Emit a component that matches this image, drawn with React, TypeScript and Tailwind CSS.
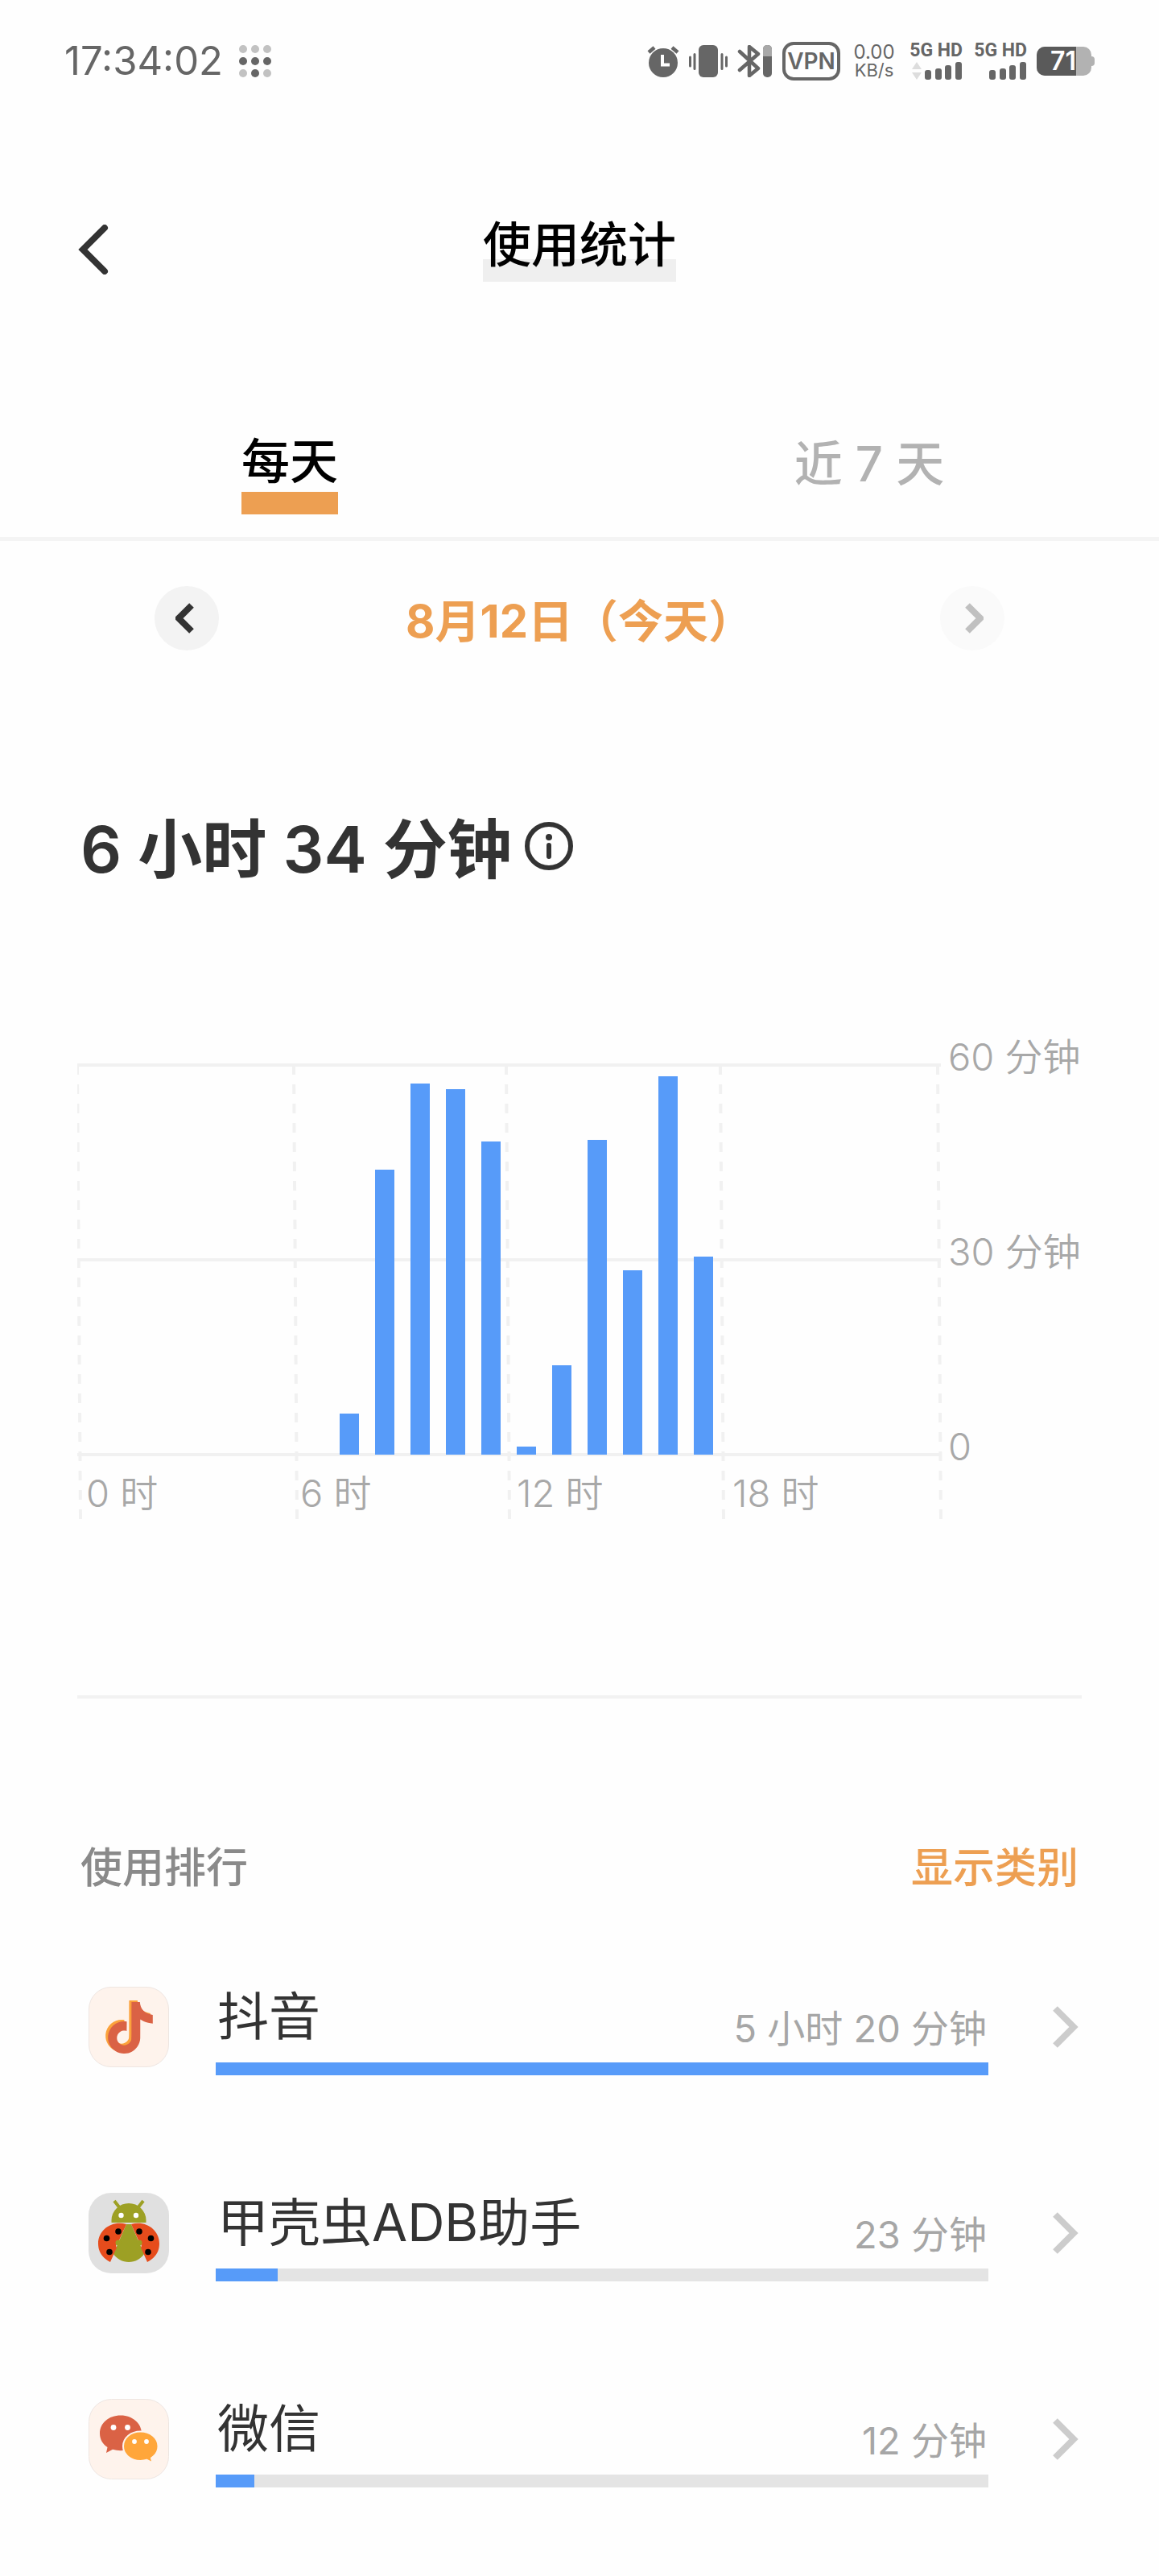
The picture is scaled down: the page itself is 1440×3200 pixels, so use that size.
import type { ReactNode } from "react";
import { SiTiktok } from "react-icons/si";

interface AppUsage {
  name: string;
  time: string;
  percent: number;
  icon: ReactNode;
}

// bar heights by hour of the day, 484 is a full hour
const hourly = [
  { hour: 7, height: 51 },
  { hour: 8, height: 354 },
  { hour: 9, height: 461 },
  { hour: 10, height: 454 },
  { hour: 11, height: 389 },
  { hour: 12, height: 10 },
  { hour: 13, height: 111 },
  { hour: 14, height: 391 },
  { hour: 15, height: 229 },
  { hour: 16, height: 470 },
  { hour: 17, height: 246 },
];

const columns = [
  { x: 0, label: "0 时", labelX: 11 },
  { x: 269, label: "6 时", labelX: 277 },
  { x: 533, label: "12 时", labelX: 546 },
  { x: 799, label: "18 时", labelX: 814 },
  { x: 1069, label: "", labelX: 0 },
];

const rows = [
  { y: 43, label: "60 分钟" },
  { y: 285, label: "30 分钟" },
  { y: 527, label: "0" },
];

function DotGrid() {
  const dark = [3, 4, 5, 7];
  return (
    <svg className="h-10 w-10" viewBox="0 0 40 40" aria-hidden="true">
      {Array.from({ length: 9 }, (_, i) => (
        <circle
          key={i}
          cx={5 + (i % 3) * 15}
          cy={5 + Math.floor(i / 3) * 15}
          r="5"
          fill={dark.includes(i) ? "#666" : "#c2c2c2"}
        />
      ))}
    </svg>
  );
}

function AlarmIcon() {
  return (
    <svg className="h-10 w-10" viewBox="0 0 40 40" aria-hidden="true">
      <circle cx="20" cy="22" r="18" fill="#666" />
      <path d="M2 9l7-6M38 9l-7-6" stroke="#666" strokeWidth="4.5" />
      <path d="M19 12v12.500h9" fill="none" stroke="#fff" strokeWidth="4" />
    </svg>
  );
}

function VibrateIcon() {
  return (
    <svg className="h-10 w-12" viewBox="0 0 48 40" aria-hidden="true">
      <rect x="12" y="0" width="24" height="40" rx="6" fill="#666" />
      <path
        d="M1.500 15v11M7 11.500v18M41 11.500v18M46.500 15v11"
        stroke="#666"
        strokeWidth="3"
        strokeLinecap="round"
      />
    </svg>
  );
}

function BluetoothIcon() {
  return (
    <svg className="h-10 w-11" viewBox="0 0 44 40" aria-hidden="true">
      <path
        d="M3 8l23 21-11 9V2l11 9L3 31"
        fill="none"
        stroke="#666"
        strokeWidth="4.500"
        strokeLinecap="round"
        strokeLinejoin="round"
      />
      <rect x="32" y="0" width="11" height="40" rx="5" fill="#666" />
      <path d="M32 14V5a5 5 0 0 1 5-5h1a5 5 0 0 1 5 5v9z" fill="#a8a8a8" />
    </svg>
  );
}

function Signal({ arrows = false }: { arrows?: boolean }) {
  return (
    <div className="flex w-[68px] flex-col items-end gap-1">
      <span className="font-[Roboto] text-[23px] leading-[20px] font-bold whitespace-nowrap">
        5G HD
      </span>
      <svg className="h-[22px] w-[64px]" viewBox="0 0 64 22" aria-hidden="true">
        {arrows && <path d="M7 0l6 9H1zM7 22l6-9H1z" fill="#ddd" />}
        <rect x="17" y="10" width="8" height="12" rx="3" fill="#666" />
        <rect x="30" y="8" width="8" height="14" rx="3" fill="#666" />
        <rect x="42" y="4" width="8" height="18" rx="3" fill="#666" />
        <rect x="55" y="0" width="8" height="22" rx="3" fill="#666" />
      </svg>
    </div>
  );
}

function Battery() {
  return (
    <div className="flex items-center">
      <div className="flex h-9 w-[68px] rounded-[10px] bg-[#b2b2b2]">
        <span className="flex w-[49px] items-center justify-end rounded-l-[10px] bg-[#5a5a5a] text-[32px] leading-9 font-semibold text-white">
          71
        </span>
      </div>
      <div className="h-3 w-1 rounded-r bg-[#b2b2b2]" />
    </div>
  );
}

function StatusBar() {
  return (
    <div className="flex h-12 items-center justify-between px-20 text-[#666]">
      <div className="flex items-center gap-5">
        <time className="text-[49px] leading-12">17:34:02</time>
        <DotGrid />
      </div>
      <div className="flex items-center gap-3">
        <AlarmIcon />
        <VibrateIcon />
        <BluetoothIcon />
        <span className="flex h-12 w-[72px] items-center justify-center rounded-[14px] border-4 border-[#666] text-[28px] leading-8 font-semibold">
          VPN
        </span>
        <div className="flex w-[60px] flex-col items-center text-[22px] leading-[22px]">
          <span className="text-[24px]">0.00</span>
          <span>KB/s</span>
        </div>
        <Signal arrows />
        <Signal />
        <Battery />
      </div>
    </div>
  );
}

function BackChevron() {
  return (
    <svg className="h-[62px] w-10" viewBox="0 0 40 62" aria-hidden="true">
      <path
        d="M34 4L7 31l27 27"
        fill="none"
        stroke="currentColor"
        strokeWidth="8"
        strokeLinecap="round"
      />
    </svg>
  );
}

function SmallChevron({ flip = false }: { flip?: boolean }) {
  return (
    <svg className="h-10 w-6" viewBox="0 0 24 40" aria-hidden="true">
      <path
        d={flip ? "M4 4l16 16L4 36" : "M20 4L4 20l16 16"}
        fill="none"
        stroke="currentColor"
        strokeWidth="8"
      />
    </svg>
  );
}

function InfoIcon() {
  return (
    <svg className="h-[60px] w-[60px]" viewBox="0 0 60 60" aria-hidden="true">
      <circle cx="30" cy="30" r="27" fill="none" stroke="#333" strokeWidth="6" />
      <circle cx="30" cy="19" r="4" fill="#333" />
      <path d="M30 29v14" stroke="#333" strokeWidth="6" strokeLinecap="round" />
    </svg>
  );
}

function DouyinIcon() {
  return (
    <div className="relative h-[100px] w-[100px] rounded-[28px] border border-[#eee6e2] bg-[#fef3ec]">
      <SiTiktok className="absolute top-4 left-4 h-16 w-16 text-[#fba23c]" />
      <SiTiktok className="absolute top-[18px] left-[19px] h-16 w-16 text-[#da6245]" />
    </div>
  );
}

function BeetleIcon() {
  return (
    <svg className="h-[100px] w-[100px]" viewBox="0 0 100 100" aria-hidden="true">
      <rect width="100" height="100" rx="28" fill="#e0e0e0" />
      <path d="M32 10l7 9M68 10l-7 9" stroke="#9da024" strokeWidth="4" />
      <path d="M28.500 37V34a21.500 21 0 0 1 43 0v3z" fill="#9da024" />
      <circle cx="40.500" cy="28" r="3.200" fill="#fff" />
      <circle cx="59" cy="28" r="3.200" fill="#fff" />
      <path d="M47 39h6l16 37c-4 6-11 10-19 10s-15-4-19-10z" fill="#9da024" />
      <path
        d="M47 39C29 34 12 46 12 63c0 10 5 18 15 23l8-18c-2-3 0-8 3-9z"
        fill="#e64c1c"
      />
      <path
        d="M53 39c18-5 35 7 35 24 0 10-5 18-15 23l-8-18c2-3 0-8-3-9z"
        fill="#e64c1c"
      />
      <circle cx="37" cy="62" r="3.500" fill="#9da024" />
      <circle cx="63" cy="62" r="3.500" fill="#9da024" />
      <g fill="#000">
        <circle cx="37" cy="48" r="3.800" />
        <circle cx="22.500" cy="56.500" r="3.800" />
        <circle cx="26" cy="73.500" r="3.800" />
        <circle cx="63" cy="48" r="3.800" />
        <circle cx="77.500" cy="56.500" r="3.800" />
        <circle cx="74" cy="73.500" r="3.800" />
      </g>
    </svg>
  );
}

function WechatIcon() {
  return (
    <svg className="h-[100px] w-[100px]" viewBox="0 0 100 100" aria-hidden="true">
      <rect x=".5" y=".5" width="99" height="99" rx="28" fill="#fef3ec" stroke="#eee6e2" />
      <path
        d="M40 20.500c-15 0-26 9.500-26 22.500 0 7 3.500 13 9.500 17l-1.500 7 8-4.200c3 .9 6.500 1.400 10 1.400 15 0 26-9 26-21.200S55 20.500 40 20.500z"
        fill="#da6245"
      />
      <circle cx="31" cy="35.500" r="3.400" fill="#fff" />
      <circle cx="48.500" cy="35.500" r="3.400" fill="#fff" />
      <path
        d="M64.500 40.500c-12 0-21.500 8-21.500 18.300s9.500 18.200 21.500 18.200c3 0 5.500-.4 8-1.200l7 3.700-1.500-6c5-3.300 8.500-8.500 8.500-14.700 0-10.300-10-18.300-22-18.300z"
        fill="#ffa63a"
        stroke="#fef3ec"
        strokeWidth="2"
      />
      <circle cx="57" cy="53" r="2.900" fill="#fff" />
      <circle cx="72" cy="53" r="2.900" fill="#fff" />
    </svg>
  );
}

const apps: AppUsage[] = [
  { name: "抖音", time: "5 小时 20 分钟", percent: 100, icon: <DouyinIcon /> },
  { name: "甲壳虫ADB助手", time: "23 分钟", percent: 8, icon: <BeetleIcon /> },
  { name: "微信", time: "12 分钟", percent: 5, icon: <WechatIcon /> },
];

function UsageChart() {
  return (
    <svg className="block h-auto w-full" viewBox="0 0 1248 610" role="img" aria-label="每小时使用时长">
      {rows.map((row) => (
        <line key={row.y} x1="0" x2="1073" y1={row.y} y2={row.y} stroke="#f1f1f1" strokeWidth="4" />
      ))}
      {columns.map((col) => (
        <line
          key={col.x}
          x1={col.x}
          x2={col.x + 4}
          y1="43"
          y2="608"
          stroke="#f1f1f1"
          strokeWidth="4"
          strokeDasharray="12 12"
        />
      ))}
      {hourly.map((bar) => (
        <rect
          key={bar.hour}
          x={18 + bar.hour * 44}
          y={527 - bar.height}
          width="24"
          height={bar.height}
          fill="#579bf9"
        />
      ))}
      <g className="text-[47px] font-[350]" fill="#a8a8a8">
        {columns.map((col) => (
          <text key={col.x} x={col.labelX} y="592">
            {col.label}
          </text>
        ))}
        {rows.map((row) => (
          <text key={row.y} x="1082" y={row.y + 7}>
            {row.label}
          </text>
        ))}
      </g>
    </svg>
  );
}

function UsageRow({ app }: { app: AppUsage }) {
  return (
    <li>
      <a href="#app" className="flex items-start pl-[14px]">
        {app.icon}
        <div className="ml-[58px] flex-1">
          <div className="flex h-[78px] items-end justify-between px-0.5">
            <span className="self-start text-[64px] leading-[74px] text-[#333]">{app.name}</span>
            <span className="text-[47px] leading-[52px] text-[#a6a6a6]">{app.time}</span>
          </div>
          <div className="mt-4 h-4 bg-[#e4e4e4]">
            <div className="h-full bg-[#579bf9]" style={{ width: `${app.percent}%` }} />
          </div>
        </div>
        <div className="ml-20 flex h-[100px] w-9 items-center text-[#ccc]">
          <svg className="h-[54px] w-8" viewBox="0 0 32 54" aria-hidden="true">
            <path d="M3 4l23 23L3 50" fill="none" stroke="currentColor" strokeWidth="8" />
          </svg>
        </div>
      </a>
    </li>
  );
}

export default function App() {
  return (
    <div
      lang="zh-CN"
      className="min-h-screen bg-[#fefefe] pt-[52px] pb-[110px] font-[Inter,'Noto_Sans_CJK_SC',sans-serif]"
    >
      <StatusBar />

      <header className="mt-[170px] grid grid-cols-[1fr_auto_1fr] items-center px-24">
        <button type="button" aria-label="返回" className="w-fit text-[#333]">
          <BackChevron />
        </button>
        <h1 className="relative pb-3 text-[60px] leading-[68px] font-medium text-black">
          <span className="absolute inset-x-0 bottom-0 h-7 bg-[#efefef]" />
          <span className="relative">使用统计</span>
        </h1>
      </header>

      <nav className="mt-[191px] grid grid-cols-2 items-start border-b-5 border-[#f4f4f4] pb-7">
        <button type="button" className="mx-auto text-[60px] leading-[64px] font-medium text-black">
          每天
          <span className="mt-[6px] block h-7 bg-[#ed9f52]" />
        </button>
        <button type="button" className="mx-auto text-[60px] leading-[70px] font-medium text-[#b2b2b2]">
          近 7 天
        </button>
      </nav>

      <div className="mt-14 flex items-end justify-between px-48">
        <button
          type="button"
          aria-label="前一天"
          className="flex h-20 w-20 items-center justify-center rounded-full bg-[#f3f3f3] pr-1 text-[#333]"
        >
          <SmallChevron />
        </button>
        <span className="text-[56px] leading-[72px] font-bold text-[#ed9f52]">
          8月12日（今天）
        </span>
        <button
          type="button"
          aria-label="后一天"
          className="flex h-20 w-20 items-center justify-center rounded-full bg-[#fafafa] pl-1 text-[#c0c0c0]"
        >
          <SmallChevron flip />
        </button>
      </div>

      <main className="px-24">
        <div className="mt-[205px] flex items-center gap-4 pl-1">
          <h2 className="text-[80px] leading-[84px] font-semibold text-[#333]">6 小时 34 分钟</h2>
          <button type="button" aria-label="说明" className="pb-2">
            <InfoIcon />
          </button>
        </div>

        <div className="mt-[183px]">
          <UsageChart />
        </div>

        <hr className="mt-[216px] border-t-4 border-[#f2f2f2]" />

        <section className="mt-[178px]">
          <div className="flex items-center justify-between px-1 text-[52px] leading-[66px] font-medium">
            <h3 className="text-[#8a8a8a]">使用排行</h3>
            <a href="#category" className="text-[#ed9f52]">
              显示类别
            </a>
          </div>
          <ul className="mt-[114px] flex flex-col gap-[146px]">
            {apps.map((app) => (
              <UsageRow key={app.name} app={app} />
            ))}
          </ul>
        </section>
      </main>
    </div>
  );
}
